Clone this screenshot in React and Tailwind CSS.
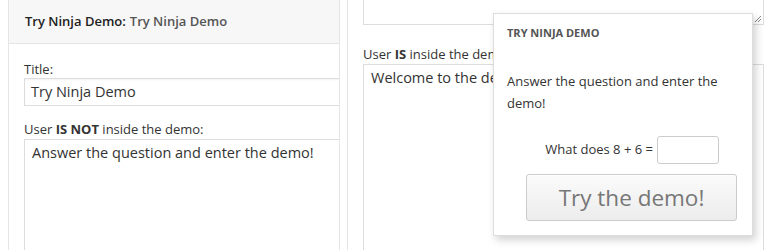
export default function App() {
  const font = { fontFamily: '"Open Sans", "Noto Sans", sans-serif' };
  return (
    <div className="relative w-[772px] h-[250px] overflow-hidden bg-white text-[#444]" style={font}>
      <div className="flex h-full">
        {/* Left widget */}
        <div className="ml-[8px] w-[332px] h-full border-x border-[#e5e5e5] overflow-hidden flex flex-col">
          <div className="h-[44px] shrink-0 bg-[#f7f7f7] border-b border-[#e5e5e5] flex items-center pl-[16px] text-[13px] font-semibold text-[#222]">
            <span>Try Ninja Demo:</span>
            <span className="ml-[4px] text-[#555]">Try Ninja Demo</span>
          </div>
          <div className="pl-[15px] pt-[16px]">
            <div className="text-[13px] leading-[18px] text-[#333]">Title:</div>
            <div className="h-[28px] w-[340px] border border-[#ddd] flex items-center pl-[6px] text-[14.5px] text-[#333] shadow-[inset_0_1px_2px_rgba(0,0,0,0.05)]">
              Try Ninja Demo
            </div>
            <div className="mt-[14px] text-[13px] leading-[18px] text-[#333]">
              User <b className="font-bold">IS NOT</b> inside the demo:
            </div>
            <div className="mt-[1px] h-[140px] w-[340px] border border-[#ddd] pl-[7px] pt-[2px] text-[14.5px] leading-[22px] text-[#333]">
              Answer the question and enter the demo!
            </div>
          </div>
        </div>
        {/* Right widget */}
        <div className="ml-[7px] flex-1 h-full border-l border-[#e5e5e5] pl-[15px] overflow-hidden">
          <div className="relative -mt-[20px] h-[45px] w-[401px] border border-[#ddd]">
            <svg className="absolute right-[1px] bottom-[1px]" width="9" height="9" viewBox="0 0 9 9">
              <path d="M8 2 L2 8 M8 5 L5 8" stroke="#888" strokeWidth="1" />
            </svg>
          </div>
          <div className="mt-[20px] text-[13px] leading-[18px] text-[#333]">
            User <b className="font-bold">IS</b> inside the demo:
          </div>
          <div className="mt-[1px] h-[200px] w-[401px] border border-[#ddd] pl-[7px] pt-[2px] text-[14.5px] leading-[22px] text-[#333]">
            Welcome to the demo!
          </div>
        </div>
      </div>

      {/* Popup */}
      <div className="absolute left-[493px] top-[13px] w-[260px] h-[223px] bg-white border border-[#ddd] shadow-[3px_4px_8px_rgba(0,0,0,0.18)] px-[13px]">
        <div className="mt-[12px] text-[11px] font-bold text-[#555] leading-[14px]">TRY NINJA DEMO</div>
        <div className="mt-[30px] text-[13px] leading-[22px] text-[#333]">
          Answer the question and enter the demo!
        </div>
        <div className="mt-[22px] flex items-center justify-end pr-[20px] text-[13px] text-[#333]">
          <span className="mr-[4px]">What does 8 + 6 =</span>
          <div className="w-[62px] h-[28px] border border-[#ccc] rounded-[3px] bg-white"></div>
        </div>
        <div className="mt-[10px] ml-[19px] w-[211px] h-[47px] rounded-[3px] border border-[#ccc] bg-gradient-to-b from-[#fbfbfb] to-[#ececec] flex items-center justify-center text-[22.5px] text-[#777] shadow-[0_1px_0_rgba(255,255,255,0.8)_inset]">
          Try the demo!
        </div>
      </div>
    </div>
  );
}
